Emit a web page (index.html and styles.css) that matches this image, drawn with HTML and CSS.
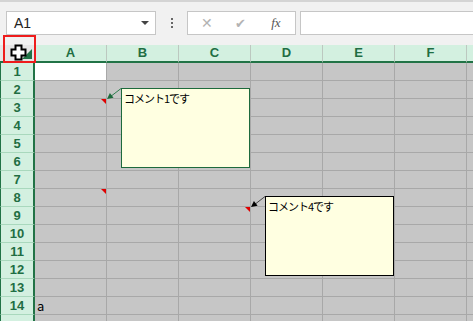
FILE: index.html
```html
<!DOCTYPE html>
<html lang="ja">
<head>
    <meta charset="UTF-8">
    <title>コメント</title>
    <link rel="stylesheet" href="styles.css">
</head>
<body>
    <!-- 数式バー -->
    <div class="toolbar">
        <div class="namebox">
            <span>A1</span>
            <span class="caret"></span>
        </div>
        <div class="dots"><i></i><i></i><i></i></div>
        <div class="fxbox">
            <span class="btn cancel">&#x2715;</span>
            <span class="btn enter">&#x2714;</span>
            <span class="btn fx">fx</span>
        </div>
        <div class="formula"></div>
    </div>

    <!-- シート -->
    <div class="sheet">
        <div class="row head">
            <div class="corner">
                <svg width="35" height="16" viewBox="0 0 35 16"><polygon points="22,14 32,14 32,4" fill="#217346"/></svg>
            </div>
            <div class="ch">A</div><div class="ch">B</div><div class="ch">C</div><div class="ch">D</div><div class="ch">E</div><div class="ch">F</div><div class="ch"></div>
        </div>
        <div class="row"><div class="rh">1</div><div class="c active"></div><div class="c"></div><div class="c"></div><div class="c"></div><div class="c"></div><div class="c"></div><div class="c"></div></div>
        <div class="row"><div class="rh">2</div><div class="c"></div><div class="c"></div><div class="c"></div><div class="c"></div><div class="c"></div><div class="c"></div><div class="c"></div></div>
        <div class="row"><div class="rh">3</div><div class="c"></div><div class="c"></div><div class="c"></div><div class="c"></div><div class="c"></div><div class="c"></div><div class="c"></div></div>
        <div class="row"><div class="rh">4</div><div class="c"></div><div class="c"></div><div class="c"></div><div class="c"></div><div class="c"></div><div class="c"></div><div class="c"></div></div>
        <div class="row"><div class="rh">5</div><div class="c"></div><div class="c"></div><div class="c"></div><div class="c"></div><div class="c"></div><div class="c"></div><div class="c"></div></div>
        <div class="row"><div class="rh">6</div><div class="c"></div><div class="c"></div><div class="c"></div><div class="c"></div><div class="c"></div><div class="c"></div><div class="c"></div></div>
        <div class="row"><div class="rh">7</div><div class="c"></div><div class="c"></div><div class="c"></div><div class="c"></div><div class="c"></div><div class="c"></div><div class="c"></div></div>
        <div class="row"><div class="rh">8</div><div class="c"></div><div class="c"></div><div class="c"></div><div class="c"></div><div class="c"></div><div class="c"></div><div class="c"></div></div>
        <div class="row"><div class="rh">9</div><div class="c"></div><div class="c"></div><div class="c"></div><div class="c"></div><div class="c"></div><div class="c"></div><div class="c"></div></div>
        <div class="row"><div class="rh">10</div><div class="c"></div><div class="c"></div><div class="c"></div><div class="c"></div><div class="c"></div><div class="c"></div><div class="c"></div></div>
        <div class="row"><div class="rh">11</div><div class="c"></div><div class="c"></div><div class="c"></div><div class="c"></div><div class="c"></div><div class="c"></div><div class="c"></div></div>
        <div class="row"><div class="rh">12</div><div class="c"></div><div class="c"></div><div class="c"></div><div class="c"></div><div class="c"></div><div class="c"></div><div class="c"></div></div>
        <div class="row"><div class="rh">13</div><div class="c"></div><div class="c"></div><div class="c"></div><div class="c"></div><div class="c"></div><div class="c"></div><div class="c"></div></div>
        <div class="row"><div class="rh">14</div><div class="c text">a</div><div class="c"></div><div class="c"></div><div class="c"></div><div class="c"></div><div class="c"></div><div class="c"></div></div>
        <div class="row"><div class="rh"></div><div class="c"></div><div class="c"></div><div class="c"></div><div class="c"></div><div class="c"></div><div class="c"></div><div class="c"></div></div>
    </div>

    <!-- コメント -->
    <div class="comment c1">コメント1です</div>
    <div class="comment c4">コメント4です</div>

    <svg class="marks" width="473" height="321" viewBox="0 0 473 321">
        <!-- コメントの印 -->
        <polygon points="101,99 106,99 106,104" fill="#e00000"/>
        <polygon points="101,189 106,189 106,194" fill="#e00000"/>
        <polygon points="245,207 250,207 250,212" fill="#e00000"/>
        <!-- 引き出し線 -->
        <line x1="121" y1="88.5" x2="110" y2="97" stroke="#2e7d4f" stroke-width="1"/>
        <polygon points="107,99 113.5,97.7 109.9,92.9" fill="#1d6a3c"/>
        <line x1="265" y1="196.5" x2="254" y2="205" stroke="#444" stroke-width="1"/>
        <polygon points="251,207 257.6,205.7 253.9,200.9" fill="#000"/>
        <!-- カーソル -->
        <path d="M15.5 45.5 h6 v4 h4 v6 h-4 v4 h-6 v-4 h-4 v-6 h4 z" fill="#fff" stroke="#000" stroke-width="2" stroke-linejoin="miter"/>
    </svg>
    <div class="pick"></div>
</body>
</html>
```

FILE: styles.css
```css
* {
    margin: 0;
    padding: 0;
    box-sizing: border-box;
}

body {
    position: relative;
    width: 473px;
    height: 321px;
    overflow: hidden;
    background-color: #f1f1f1;
    font-family: "Liberation Sans", Arial, sans-serif;
}

/* 数式バー */
.toolbar {
    height: 45px;
    border-top: 2px solid #d4d4d4;
    padding-top: 9px;
    display: flex;
    align-items: flex-start;
}

.namebox {
    margin-left: 6px;
    width: 150px;
    height: 24px;
    background-color: #fff;
    border: 1px solid #c6c6c6;
    display: flex;
    align-items: center;
    justify-content: space-between;
    padding: 0 6px 0 7px;
    font-size: 14px;
    color: #222;
}

.caret {
    width: 0;
    height: 0;
    border-left: 4px solid transparent;
    border-right: 4px solid transparent;
    border-top: 4px solid #444;
}

.dots {
    width: 31px;
    height: 24px;
    display: flex;
    flex-direction: column;
    align-items: center;
    justify-content: center;
    gap: 2px;
}

.dots i {
    display: block;
    width: 2px;
    height: 2px;
    background-color: #666;
}

.fxbox {
    width: 109px;
    height: 24px;
    background-color: #fff;
    border: 1px solid #c6c6c6;
    display: flex;
    align-items: center;
    padding-left: 13px;
}

.btn {
    width: 35px;
    color: #b3b3b3;
    font-size: 14px;
    text-align: left;
}

.btn.enter {
    font-size: 13px;
    padding-left: 3px;
}

.btn.fx {
    color: #555;
    font-family: "Liberation Serif", serif;
    font-style: italic;
    font-size: 13px;
    padding-left: 8px;
}

.formula {
    margin-left: 4px;
    flex: 1;
    height: 24px;
    background-color: #fff;
    border: 1px solid #c6c6c6;
    border-right: none;
}

/* シート */
.row {
    display: grid;
    grid-template-columns: 35px repeat(7, 72px);
    height: 18px;
}

.head .corner,
.head .ch {
    height: 18px;
    border-bottom: 2px solid #217346;
    background-color: #d3f0e0;
}

.head .corner {
    background-color: #e6e6e6;
}

.head .ch {
    border-right: 1px solid #bcc8c0;
    color: #1f6e43;
    font-size: 13px;
    font-weight: bold;
    line-height: 16px;
    text-align: center;
}

.rh {
    background-color: #d3f0e0;
    border-left: 1px solid #217346;
    border-right: 2px solid #217346;
    border-bottom: 1px solid #a9d8bd;
    color: #1f6e43;
    font-size: 13px;
    font-weight: bold;
    line-height: 17px;
    text-align: center;
}

.c {
    background-color: #c6c6c6;
    border-right: 1px solid #a8a8a8;
    border-bottom: 1px solid #a8a8a8;
}

.c.active {
    background-color: #fff;
}

.c.text {
    font-family: "Noto Sans CJK JP", sans-serif;
    font-size: 13px;
    line-height: 17px;
    padding-left: 2px;
    color: #000;
}

/* コメント */
.comment {
    position: absolute;
    width: 129px;
    height: 80px;
    background-color: #ffffe1;
    padding: 2px 0 0 2px;
    font-family: "Noto Sans CJK JP", sans-serif;
    font-size: 11px;
    letter-spacing: -1px;
    line-height: 14px;
    color: #000;
}

.c1 {
    left: 121px;
    top: 88px;
    border: 1px solid #1d6a3c;
}

.c4 {
    left: 265px;
    top: 196px;
    border: 1px solid #000;
}

.marks {
    position: absolute;
    left: 0;
    top: 0;
    pointer-events: none;
}

.pick {
    position: absolute;
    left: 3px;
    top: 35px;
    width: 33px;
    height: 28px;
    border: 2px solid #ee1c1c;
}
```
